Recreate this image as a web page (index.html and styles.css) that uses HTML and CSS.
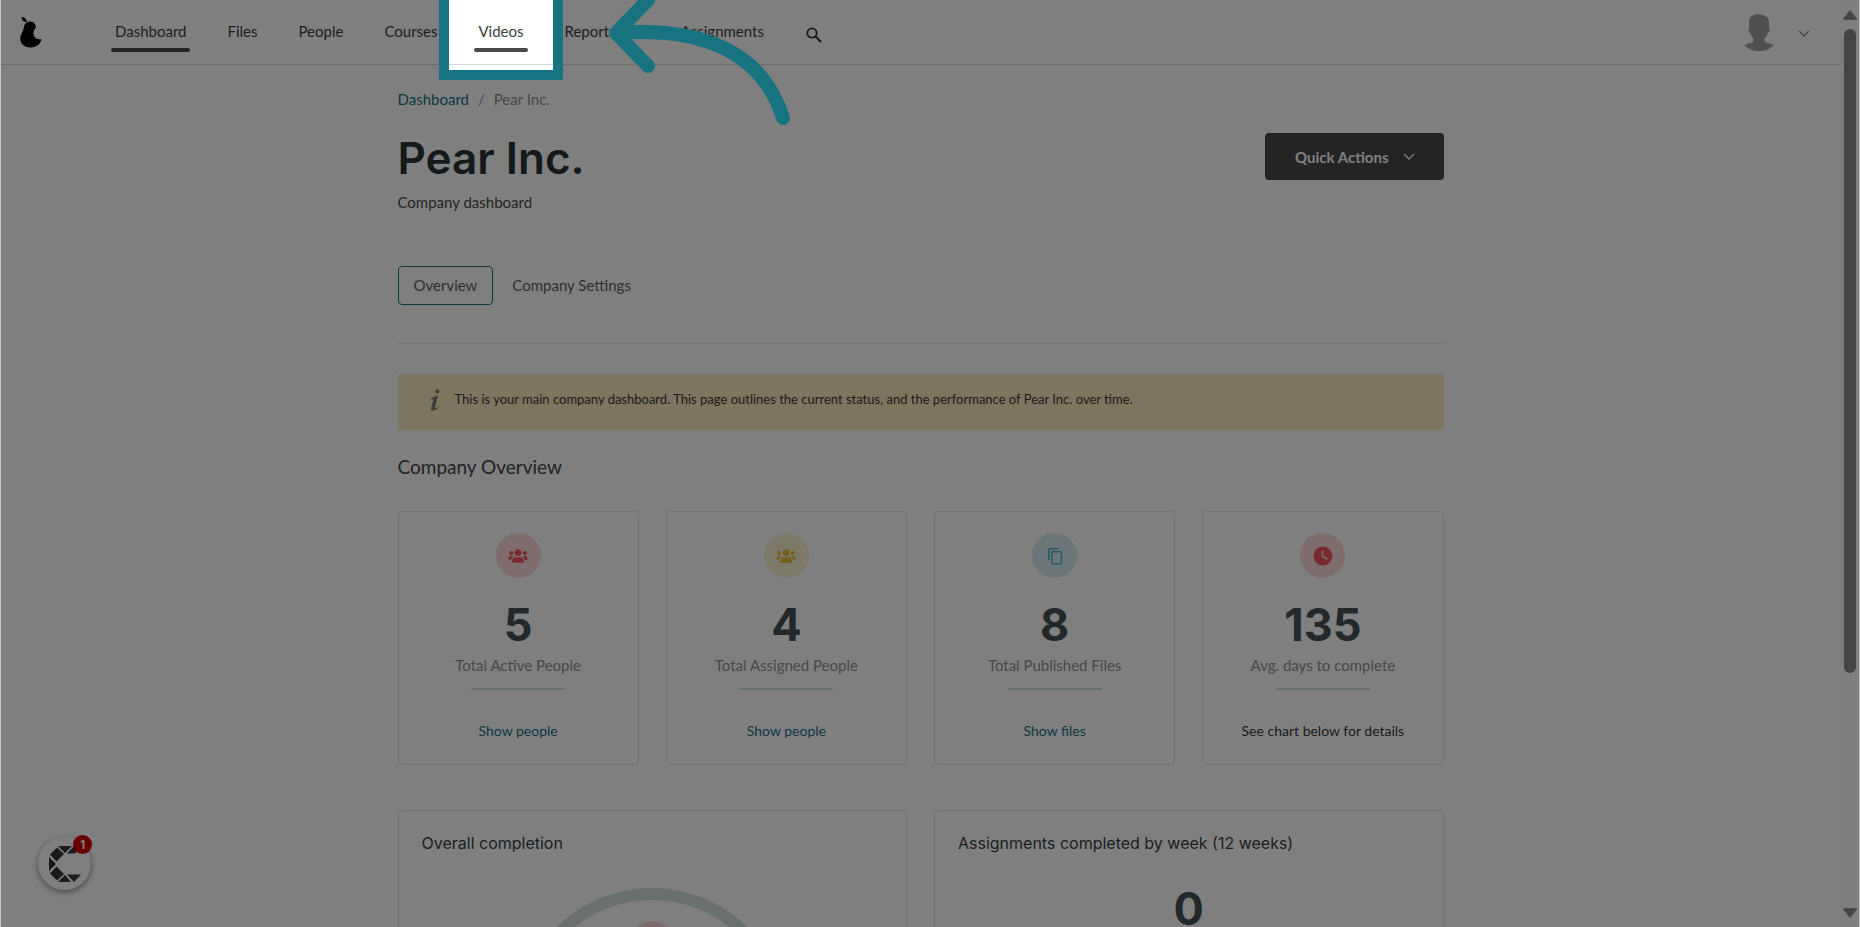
FILE: index.html
```html
<!DOCTYPE html>
<html lang="en">
<head>
<meta charset="utf-8">
<title>Pear Inc. dashboard</title>
<link rel="stylesheet" href="styles.css">
</head>
<body>
<svg class="defs" width="0" height="0" aria-hidden="true">
  <symbol id="chevron" viewBox="0 0 12 8"><path d="M1.500 1.500 6 6l4.500-4.500" fill="none" stroke="currentColor" stroke-width="1.300" stroke-linecap="round"/></symbol>
  <symbol id="people" viewBox="0 0 20 14">
    <g fill="currentColor"><circle cx="10" cy="3.600" r="3.400"/><circle cx="3.200" cy="4" r="2"/><circle cx="16.800" cy="4" r="2"/>
    <path d="M4.200 12.500c0-3 1.200-4.300 3.200-4.300h5.200c2 0 3.200 1.300 3.200 4.300 0 .9-.5 1.300-1.300 1.300h-9c-.8 0-1.300-.4-1.300-1.300zM.5 10c0-2 .8-3 2.200-3h1.500c.5 0 .8.1 1.100.4C4 8.300 3.300 9.300 3.100 11H1.500C.8 11 .5 10.700.5 10zM19.500 10c0-2-.8-3-2.200-3h-1.500c-.5 0-.8.1-1.100.4 1.300.9 2 1.900 2.200 3.600h1.600c.7 0 1-.3 1-1z"/></g>
  </symbol>
</svg>
<div class="page">
  <header class="header">
    <a class="logo" href="#" aria-label="Home">
      <svg width="22" height="32" viewBox="0 0 22 32"><path d="M1.500 1C4 .8 6.500 2.500 7 6 4 6 1.500 4 1.500 1z"/><path d="M10.500 5.500c3 0 5 2 5.200 5l.2 1.500c-4 3-3.300 11 3 11.200l2.600.1C20.500 28 16.500 31.500 10.800 31.500 5 31.500.5 28.500.3 23c-.2-5 3.400-7.500 3.700-12 .2-3.300 3-5.500 6.500-5.500z"/></svg>
    </a>
    <nav class="nav">
      <a class="nav-link active" href="#">Dashboard</a>
      <a class="nav-link" href="#">Files</a>
      <a class="nav-link" href="#">People</a>
      <a class="nav-link" href="#">Courses</a>
      <span class="tour-target">
        <a class="nav-link active" href="#">Videos</a>
        <span class="spotlight"></span>
        <svg class="tour-arrow" width="200" height="130" viewBox="0 0 200 130" aria-hidden="true"><path d="M16 33C105 26 163 54 183 118M48 0 16 33l32 33" fill="none" stroke="currentColor" stroke-width="14" stroke-linecap="round" stroke-linejoin="round"/></svg>
      </span>
      <a class="nav-link wide" href="#">Reports</a>
      <a class="nav-link" href="#">Assignments</a>
      <button class="icon-button search" aria-label="Search"><svg width="16" height="16" viewBox="0 0 16 16"><circle cx="6" cy="6" r="4.700" fill="none" stroke="currentColor" stroke-width="1.800"/><path d="M9.500 9.500 15 15" stroke="currentColor" stroke-width="2.200"/></svg></button>
    </nav>
    <button class="icon-button account" aria-label="Account menu">
      <svg width="30" height="37" viewBox="0 0 30 37"><path fill="#a0a0a0" d="M9 1.500C13-.2 17-.3 20 1.500c4 1 5.500 4 5 8.500l-.3 3.500c1.500.3 1.300 5-.9 5.500-.6 2.500-2 4.500-3.300 5.800-.3 3.700 1.500 4 4.500 4.500l4.700 1.700C26 35 21.500 37 15 37S4 35 .3 31L5 29.300c3-.5 4.800-.8 4.500-4.500C8.200 23.500 6.800 21.500 6.200 19c-2.200-.5-2.400-5.200-.9-5.500L5 10c-.4-4.500 1-7.500 4-8.500z"/></svg>
      <svg class="account-chevron" width="12" height="8"><use href="#chevron"/></svg>
    </button>
  </header>

  <main class="content">
    <div class="breadcrumb"><a href="#">Dashboard</a><span>/</span><span>Pear Inc.</span></div>
    <div class="title-row">
      <h1>Pear Inc.</h1>
      <button class="quick-actions">Quick Actions <svg width="12" height="8"><use href="#chevron"/></svg></button>
    </div>
    <p class="subtitle">Company dashboard</p>
    <div class="tabs"><button class="tab selected">Overview</button><button class="tab">Company Settings</button></div>
    <div class="notice">
      <svg width="10" height="22" viewBox="0 0 10 22" aria-hidden="true"><g fill="currentColor"><circle cx="7.300" cy="2.200" r="2"/><path d="M.5 9.200C3 8.800 4.800 7.800 6.300 6.500l1.500.3-2.600 11.500c-.2.900.2 1 .8.600L8 17.700l.6.700C6.800 20.300 4.500 21.500 2.800 21.500c-1.500 0-2-1-1.600-2.600L3.300 10.500c-.8-.4-1.800-.3-2.800-.3z"/></g></svg>
      <p>This is your main company dashboard. This page outlines the current status, and the performance of Pear Inc. over time.</p>
    </div>
    <h2>Company Overview</h2>
    <section class="stats">
      <article class="card stat">
        <span class="badge red"><svg width="20" height="14"><use href="#people"/></svg></span>
        <strong class="number">5</strong><span class="label">Total Active People</span><a class="more" href="#">Show people</a>
      </article>
      <article class="card stat">
        <span class="badge yellow"><svg width="20" height="14"><use href="#people"/></svg></span>
        <strong class="number">4</strong><span class="label">Total Assigned People</span><a class="more" href="#">Show people</a>
      </article>
      <article class="card stat">
        <span class="badge teal"><svg width="16" height="18" viewBox="0 0 16 18"><g fill="none" stroke="currentColor" stroke-width="1.500"><path d="M1.800 13V2.800c0-.7.400-1 1-1H11.500"/><rect x="4.800" y="4.800" width="9.700" height="12" rx="1"/></g></svg></span>
        <strong class="number">8</strong><span class="label">Total Published Files</span><a class="more" href="#">Show files</a>
      </article>
      <article class="card stat">
        <span class="badge red"><svg width="20" height="20" viewBox="0 0 20 20"><circle cx="10" cy="10" r="9.500" fill="currentColor"/><path d="M9.500 4.500v5.800l5 3" fill="none" stroke="#ffd9d9" stroke-width="1.600"/></svg></span>
        <strong class="number">135</strong><span class="label">Avg. days to complete</span><span class="more plain">See chart below for details</span>
      </article>
    </section>
    <section class="charts">
      <article class="card chart">
        <h3>Overall completion</h3>
        <svg class="ring" width="272" height="272" viewBox="0 0 272 272" aria-hidden="true"><circle cx="136" cy="136" r="130" fill="none" stroke="#d5dfe1" stroke-width="12"/><circle cx="136" cy="56" r="23" fill="#ffd9d9"/></svg>
      </article>
      <article class="card chart">
        <h3>Assignments completed by week (12 weeks)</h3>
        <strong class="number">0</strong>
      </article>
    </section>
  </main>
  <button class="chat" aria-label="Open help, 1 new item">
    <svg width="34" height="38" viewBox="0 0 34 38"><g fill="#363636"><path d="M10 1h14l-7 7z"/><path d="M19 8.500 26 1h7l-6 7.500z"/><path d="m9 2.500 7 6.500-7.500 7.500L2 9.500z"/><path d="M1 12v14l7-7z"/><path d="m8.500 21.500 7.500 7.500-7 6.500-7-7z"/><path d="m17 30 6 7H10z"/><path d="M19 29.500h14L26 37z"/></g></svg>
    <span class="count">1</span>
  </button>
</div>
<div class="scrollbar" aria-hidden="true">
  <svg width="14" height="10" viewBox="0 0 14 10"><path d="M7 1 13 9H1z" fill="#888" stroke="#888" stroke-width="1.500" stroke-linejoin="round"/></svg>
  <div class="track"><div class="thumb"></div></div>
  <svg width="14" height="10" viewBox="0 0 14 10"><path d="M7 9 1 1h12z" fill="#888" stroke="#888" stroke-width="1.500" stroke-linejoin="round"/></svg>
</div>
</body>
</html>
```
FILE: styles.css
```css
* { box-sizing: border-box; }
body {
  margin: 0;
  height: 100vh;
  overflow: hidden;
  display: grid;
  grid-template-columns: minmax(0, 1fr) 19px;
  background: #fff;
  color: #484a4b;
  font-family: Lato, sans-serif;
  font-size: 15px;
  line-height: 20px;
}
body::after {
  content: "";
  position: fixed;
  inset: 0;
  z-index: 20;
  border: solid #c4c4c4;
  border-width: 0 1px;
  pointer-events: none;
}
h1, h2, h3, p { margin: 0; }
a { color: #17737f; text-decoration: none; }
button { font: inherit; color: inherit; border: 0; background: none; padding: 0; }
svg { display: block; flex: none; }
.defs { position: absolute; }
.page { height: 100vh; }

.header {
  display: flex;
  align-items: center;
  height: 65px;
  padding: 0 31px 0 20px;
  border-bottom: 1px solid #d0dadc;
}
.logo { color: #000; margin-right: 69px; }
.nav { display: flex; align-items: center; gap: 33px; flex: 1; }
.nav-link {
  display: block;
  padding: 21px 4px 7px;
  margin-bottom: 12px;
  color: #3b3f40;
  position: relative;
  line-height: 20px;
  border-bottom: 4px solid transparent;
}
.nav-link.wide { padding-right: 28px; }
.nav-link.active::after {
  content: "";
  position: absolute;
  inset: auto 0 -4px;
  height: 4px;
  border-radius: 2px;
  background: #484849;
}
.tour-target { position: relative; z-index: 10; }
.spotlight {
  position: absolute;
  top: 0;
  left: -35px;
  right: -35px;
  height: 80px;
  border: 10px solid #17737f;
  border-top: 0;
  box-shadow: 0 0 0 9999px rgba(0, 0, 0, .5);
  pointer-events: none;
}
.tour-arrow {
  position: absolute;
  top: 0;
  left: 126px;
  color: #17737f;
  pointer-events: none;
}
.icon-button { display: flex; align-items: center; }
.search { color: #303435; padding: 6px 0 0 5px; }
.account { gap: 24px; color: #7c8f99; }
.account-chevron { margin-top: 4px; }

.content {
  max-width: 1046px;
  margin: 0 auto;
  padding-top: 24px;
}
.breadcrumb { display: flex; gap: 9px; color: #8b8f90; }
.title-row {
  display: flex;
  justify-content: space-between;
  align-items: flex-start;
  margin-top: 24px;
}
h1 {
  font: 600 44px/50px Inter, sans-serif;
  color: #293537;
}
.quick-actions {
  display: flex;
  align-items: center;
  gap: 14px;
  height: 47px;
  padding: 0 29px 0 30px;
  border-radius: 4px;
  background: #484849;
  color: #fff;
  font-weight: 700;
}
.subtitle { margin-top: 9px; }
.tabs {
  display: flex;
  gap: 3px;
  padding-bottom: 38px;
  margin-top: 54px;
  border-bottom: 1px solid #e2e6e7;
}
.tab {
  height: 39px;
  padding: 0 15px 2px;
  border: 1px solid transparent;
  border-radius: 4px;
  color: #5c6061;
}
.tab.selected { border-color: #17737f; }
.notice {
  display: flex;
  gap: 15px;
  margin-top: 30px;
  padding: 15px 32px 19px;
  background: #f8ebbf;
  color: #7a7a76;
}
.notice p { color: #383a38; font-size: 13px; }
h2 {
  margin: 25px 0 32px;
  font-size: 19px;
  line-height: 24px;
  font-weight: 400;
  color: #41484b;
}
.card { border: 1px solid #dbe2e3; border-radius: 4px; }
.stats { display: grid; grid-template-columns: repeat(4, 1fr); gap: 27px; }
.stat {
  display: flex;
  flex-direction: column;
  align-items: center;
  padding: 21px 0 23px;
}
.badge {
  display: grid;
  place-items: center;
  width: 45px;
  height: 45px;
  border-radius: 50%;
}
.red { background: #ffd9d9; color: #f0545c; }
.yellow { background: #fbf2d0; color: #e5c035; }
.teal { background: #d6edf0; color: #4bb2be; }
.number {
  font: 700 45px/50px Inter, sans-serif;
  color: #465256;
}
.stat .number { margin: 22px 0 5px; }
.label {
  color: #8b8f90;
  line-height: 20px;
}
.label::after {
  content: "";
  display: block;
  width: 94px;
  height: 2px;
  margin: 13px auto 31px;
  background: #d0dadc;
}
.more { font-size: 14px; }
.plain { color: #383a3b; }
.charts {
  display: grid;
  grid-template-columns: repeat(2, 1fr);
  gap: 27px;
  margin-top: 45px;
}
.chart {
  display: flex;
  flex-direction: column;
  align-items: center;
  min-height: 400px;
  padding: 22px 23px;
}
h3 {
  align-self: stretch;
  font: 400 16px/20px Inter, sans-serif;
  color: #383e41;
}
.ring { margin-top: 35px; }
.chart .number { margin-top: 31px; }

.chat {
  position: fixed;
  left: 38px;
  bottom: 37px;
  display: grid;
  place-items: center;
  width: 53px;
  height: 53px;
  border-radius: 50%;
  background: #fff;
  box-shadow: 0 2px 6px rgba(0, 0, 0, .45);
}
.count {
  position: absolute;
  top: -2px;
  right: -1px;
  width: 19px;
  height: 19px;
  border-radius: 50%;
  background: #d60000;
  color: #fff;
  font: 700 12px/19px Inter, sans-serif;
}
.scrollbar {
  display: flex;
  flex-direction: column;
  align-items: center;
  gap: 9px;
  padding: 10px 2px 9px 0;
  background: #fcfcfc;
}
.track { flex: 1; width: 12px; }
.thumb { height: 74%; border-radius: 6px; background: #888; }
```
